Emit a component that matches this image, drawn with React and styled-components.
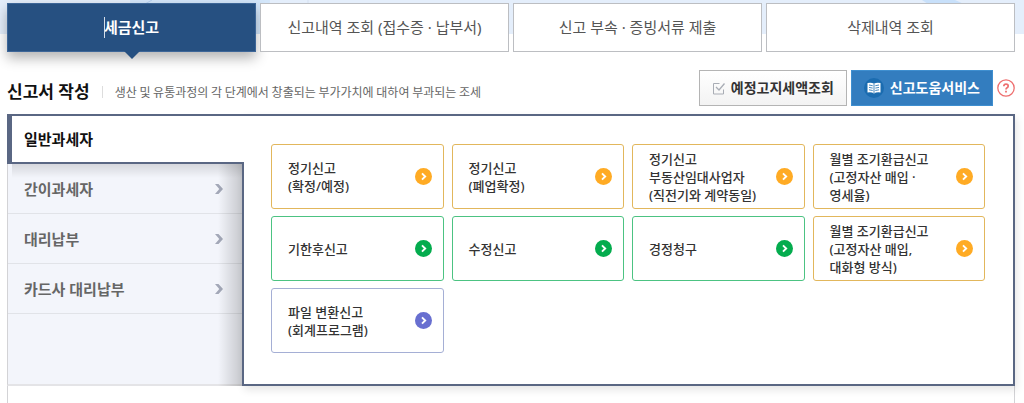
import styled, { createGlobalStyle } from "styled-components";

const tabs = [
  "세금신고",
  "신고내역 조회 (접수증 · 납부서)",
  "신고 부속 · 증빙서류 제출",
  "삭제내역 조회",
];

const taxpayers = ["일반과세자", "간이과세자", "대리납부", "카드사 대리납부"];

const reports = [
  { lines: ["정기신고", "(확정/예정)"], tone: "orange" },
  { lines: ["정기신고", "(폐업확정)"], tone: "orange" },
  { lines: ["정기신고", "부동산임대사업자", "(직전기와 계약동일)"], tone: "orange" },
  { lines: ["월별 조기환급신고", "(고정자산 매입 ·", "영세율)"], tone: "orange" },
  { lines: ["기한후신고"], tone: "green" },
  { lines: ["수정신고"], tone: "green" },
  { lines: ["경정청구"], tone: "green" },
  { lines: ["월별 조기환급신고", "(고정자산 매입,", "대화형 방식)"], tone: "orange" },
  { lines: ["파일 변환신고", "(회계프로그램)"], tone: "purple" },
];

const tones = {
  orange: { border: "#e2b75c", fill: "#ffab24" },
  green: { border: "#4cc382", fill: "#04ac4e" },
  purple: { border: "#a5afd5", fill: "#686fd0" },
};

export default function App() {
  return (
    <>
      <GlobalStyle />
      <Page>
        <Backdrop aria-hidden="true">
          <circle cx="200" cy="0" r="70" fill="#d3e6fa" />
          <path d="M145 4L152 0" stroke="#b4cff0" />
          <path d="M308 0V34" stroke="#d5e0f0" />
          <path d="M922 0H955L964 4H928Z" fill="#c8e0fa" />
        </Backdrop>

        <Tabs>
          {tabs.map((tab, i) => (
            <Tab key={tab} type="button" $active={i === 0}>
              <span>{tab}</span>
            </Tab>
          ))}
        </Tabs>

        <Heading>
          <h1>신고서 작성</h1>
          <p>생산 및 유통과정의 각 단계에서 창출되는 부가가치에 대하여 부과되는 조세</p>
          <Actions>
            <ActionButton type="button">
              <CheckIcon />
              예정고지세액조회
            </ActionButton>
            <ActionButton type="button" $primary>
              <BookIcon />
              신고도움서비스
            </ActionButton>
            <HelpButton type="button" aria-label="도움말">
              <HelpIcon />
            </HelpButton>
          </Actions>
        </Heading>

        <Panel>
          <Side>
            {taxpayers.map((name, i) => (
              <SideItem key={name} type="button" $active={i === 0}>
                {name}
                {i > 0 && <SideArrow />}
              </SideItem>
            ))}
          </Side>
          <Content>
            {reports.map((report) => (
              <Card key={report.lines.join()} type="button" $tone={tones[report.tone]}>
                <span className="label">
                  {report.lines.map((line) => (
                    <span key={line}>{line}</span>
                  ))}
                </span>
                <CardArrow color={tones[report.tone].fill} />
              </Card>
            ))}
          </Content>
        </Panel>
        <Below />
      </Page>
    </>
  );
}

function CheckIcon() {
  return (
    <svg width="13" height="13" viewBox="0 0 13 13" fill="none" stroke="#a9adb5">
      <path d="M7.5 1.500H1.500V12H11.500V7.500" />
      <path d="M4 5L7 8L12.500 1.500" strokeWidth="1.300" />
    </svg>
  );
}

function BookIcon() {
  return (
    <svg width="20" height="20" viewBox="0 0 20 20">
      <circle cx="10" cy="10" r="10" fill="#1b6cb0" />
      <path d="M3.500 5Q7.500 4 10 5.800Q12.500 4 16.500 5V14.500Q12.500 13.800 10 15.500Q7.500 13.800 3.500 14.500Z" fill="#fff" />
      <path
        d="M10 6V15M5 7L8.700 7.700M5 9.400L8.700 10.100M5 11.800L8.700 12.500M15 7L11.300 7.700M15 9.400L11.300 10.100M15 11.800L11.300 12.500"
        stroke="#1b6cb0"
        strokeWidth="0.8"
      />
    </svg>
  );
}

function HelpIcon() {
  return (
    <svg width="18" height="18" viewBox="0 0 18 18" fill="none" stroke="#ee6f6f">
      <circle cx="9" cy="9" r="8.200" strokeWidth="1.300" />
      <path d="M6.800 7.300Q6.900 5.200 9 5.200Q11.200 5.200 11.200 7Q11.200 8.100 10.100 8.700Q9 9.300 9 10.500" strokeWidth="1.700" />
      <path d="M9 11.700V13.400" strokeWidth="1.800" />
    </svg>
  );
}

function SideArrow() {
  return (
    <svg width="8" height="10" viewBox="0 0 8 10" fill="#a3a8b8">
      <path d="M0 0H3.500L8 5L3.500 10H0L4.300 5Z" />
    </svg>
  );
}

function CardArrow({ color }) {
  return (
    <svg width="17" height="17" viewBox="0 0 17 17" fill="none">
      <circle cx="8.500" cy="8.500" r="8.500" fill={color} />
      <path d="M7 5.300L10.200 8.500L7 11.700" stroke="#fff" strokeWidth="1.900" />
    </svg>
  );
}

const GlobalStyle = createGlobalStyle`
  * {
    box-sizing: border-box;
  }
  body {
    margin: 0;
    background: #fff;
  }
  body,
  button {
    font-family: "Noto Sans", "Noto Sans CJK KR", sans-serif;
  }
  button {
    cursor: pointer;
  }
`;

const Page = styled.main`
  position: relative;
  display: flex;
  flex-direction: column;
  min-height: 100vh;
  padding: 3px 9px 0 7px;
`;

const Backdrop = styled.svg`
  position: absolute;
  top: 0;
  left: 0;
  z-index: -1;
  width: 100%;
  height: 34px;
  background: #e4eefb;
`;

const Tabs = styled.nav`
  display: grid;
  grid-template-columns: repeat(4, 1fr);
  gap: 4px;
`;

const Tab = styled.button`
  position: relative;
  height: 49px;
  padding: 0 8px 2px;
  border: 1px solid ${({ $active }) => ($active ? "#3d6698" : "#bcbec2")};
  background: ${({ $active }) => ($active ? "#265081" : "#fff")};
  color: ${({ $active }) => ($active ? "#fff" : "#555")};
  font-size: 15px;
  font-weight: ${({ $active }) => ($active ? 700 : 400)};
  line-height: 24px;
  box-shadow: ${({ $active }) => ($active ? "0 6px 12px rgba(0, 0, 0, 0.3)" : "none")};

  /* pointer below the selected tab */
  &::after {
    content: "";
    display: ${({ $active }) => ($active ? "block" : "none")};
    position: absolute;
    top: 100%;
    left: 50%;
    margin-left: -8px;
    border: 8px solid transparent;
    border-top-color: #265081;
    border-bottom: 0;
  }

  span {
    position: relative;
  }
  /* text caret */
  span::before {
    content: "";
    display: ${({ $active }) => ($active ? "block" : "none")};
    position: absolute;
    top: 0;
    left: 0;
    width: 1px;
    height: 21px;
    background: #d5dde8;
  }
`;

const Heading = styled.header`
  display: flex;
  align-items: center;
  margin: 18px 0 8px;

  h1 {
    margin: 0;
    padding-top: 8px;
    color: #111;
    font-size: 17px;
    line-height: 24px;
  }
  p {
    margin: 8px 0 0 12px;
    padding-left: 12px;
    border-left: 1px solid #ddd;
    color: #666;
    font-family: "Noto Sans CJK KR", sans-serif;
    font-size: 12px;
    line-height: 12px;
  }
`;

const Actions = styled.div`
  display: flex;
  align-items: center;
  gap: 4px;
  margin-left: auto;
`;

const ActionButton = styled.button`
  display: flex;
  align-items: center;
  gap: 6px;
  height: 36px;
  padding: 0 12px;
  border: 1px solid ${({ $primary }) => ($primary ? "#3f8fd0" : "#b4b4b4")};
  background: ${({ $primary }) =>
    $primary ? "#337dbf" : "linear-gradient(#fff, #f3f3f3)"};
  color: ${({ $primary }) => ($primary ? "#fff" : "#333")};
  font-size: 14px;
  font-weight: 700;
  line-height: 20px;
`;

const HelpButton = styled.button`
  display: flex;
  padding: 0;
  border: 0;
  background: none;
`;

const Panel = styled.section`
  display: grid;
  grid-template-columns: 235px 1fr;
`;

const Side = styled.aside`
  display: flex;
  flex-direction: column;
  border-left: 1px solid #d3d3d6;
  border-bottom: 2px solid #e4e4e7;
  background: #f3f5fb;
`;

const SideItem = styled.button`
  position: relative;
  z-index: ${({ $active }) => ($active ? 2 : 0)};
  display: flex;
  align-items: center;
  justify-content: space-between;
  height: 50px;
  margin: ${({ $active }) => ($active ? "0 -2px 0 -1px" : "0")};
  padding: ${({ $active }) => ($active ? "0 12px" : "0 19px 0 16px")};
  border: solid ${({ $active }) => ($active ? "#5a6783" : "#e1e3e8")};
  border-width: ${({ $active }) => ($active ? "2px 0 2px 5px" : "0 0 1px")};
  background: ${({ $active }) => ($active ? "#fff" : "none")};
  color: ${({ $active }) => ($active ? "#111" : "#666")};
  font-size: 15px;
  font-weight: 700;
  line-height: 22px;
  text-align: left;

  /* shade cast on the rows below */
  &::after {
    content: "";
    display: ${({ $active }) => ($active ? "block" : "none")};
    position: absolute;
    top: calc(100% + 2px);
    left: 0;
    right: 2px;
    height: 14px;
    background: linear-gradient(rgba(0, 0, 0, 0.12), transparent);
  }
`;

const Content = styled.div`
  position: relative;
  z-index: 1;
  display: grid;
  grid-template-columns: repeat(4, 1fr);
  grid-auto-rows: minmax(65px, auto);
  gap: 7px 8px;
  padding: 28px 28px 31px 27px;
  border: 2px solid #5a6783;
  background: #fff;
  box-shadow: 2px 4px 8px rgba(0, 0, 0, 0.1);

  &::before {
    content: "";
    position: absolute;
    top: 48px;
    bottom: -2px;
    right: calc(100% + 2px);
    width: 24px;
    background: linear-gradient(to left, rgba(0, 0, 0, 0.18), rgba(0, 0, 0, 0.12) 35%, transparent);
  }
`;

const Card = styled.button`
  display: flex;
  align-items: center;
  justify-content: space-between;
  padding: 0 11px 0 16px;
  border: 1px solid ${({ $tone }) => $tone.border};
  border-radius: 3px;
  background: #fff;
  color: #333;
  font-size: 13px;
  font-weight: 500;
  line-height: 18px;
  text-align: left;

  .label {
    display: flex;
    flex-direction: column;
  }
  svg {
    flex-shrink: 0;
  }
`;

const Below = styled.div`
  flex: 1;
  border: solid #d3d3d6;
  border-width: 0 1px;
`;
